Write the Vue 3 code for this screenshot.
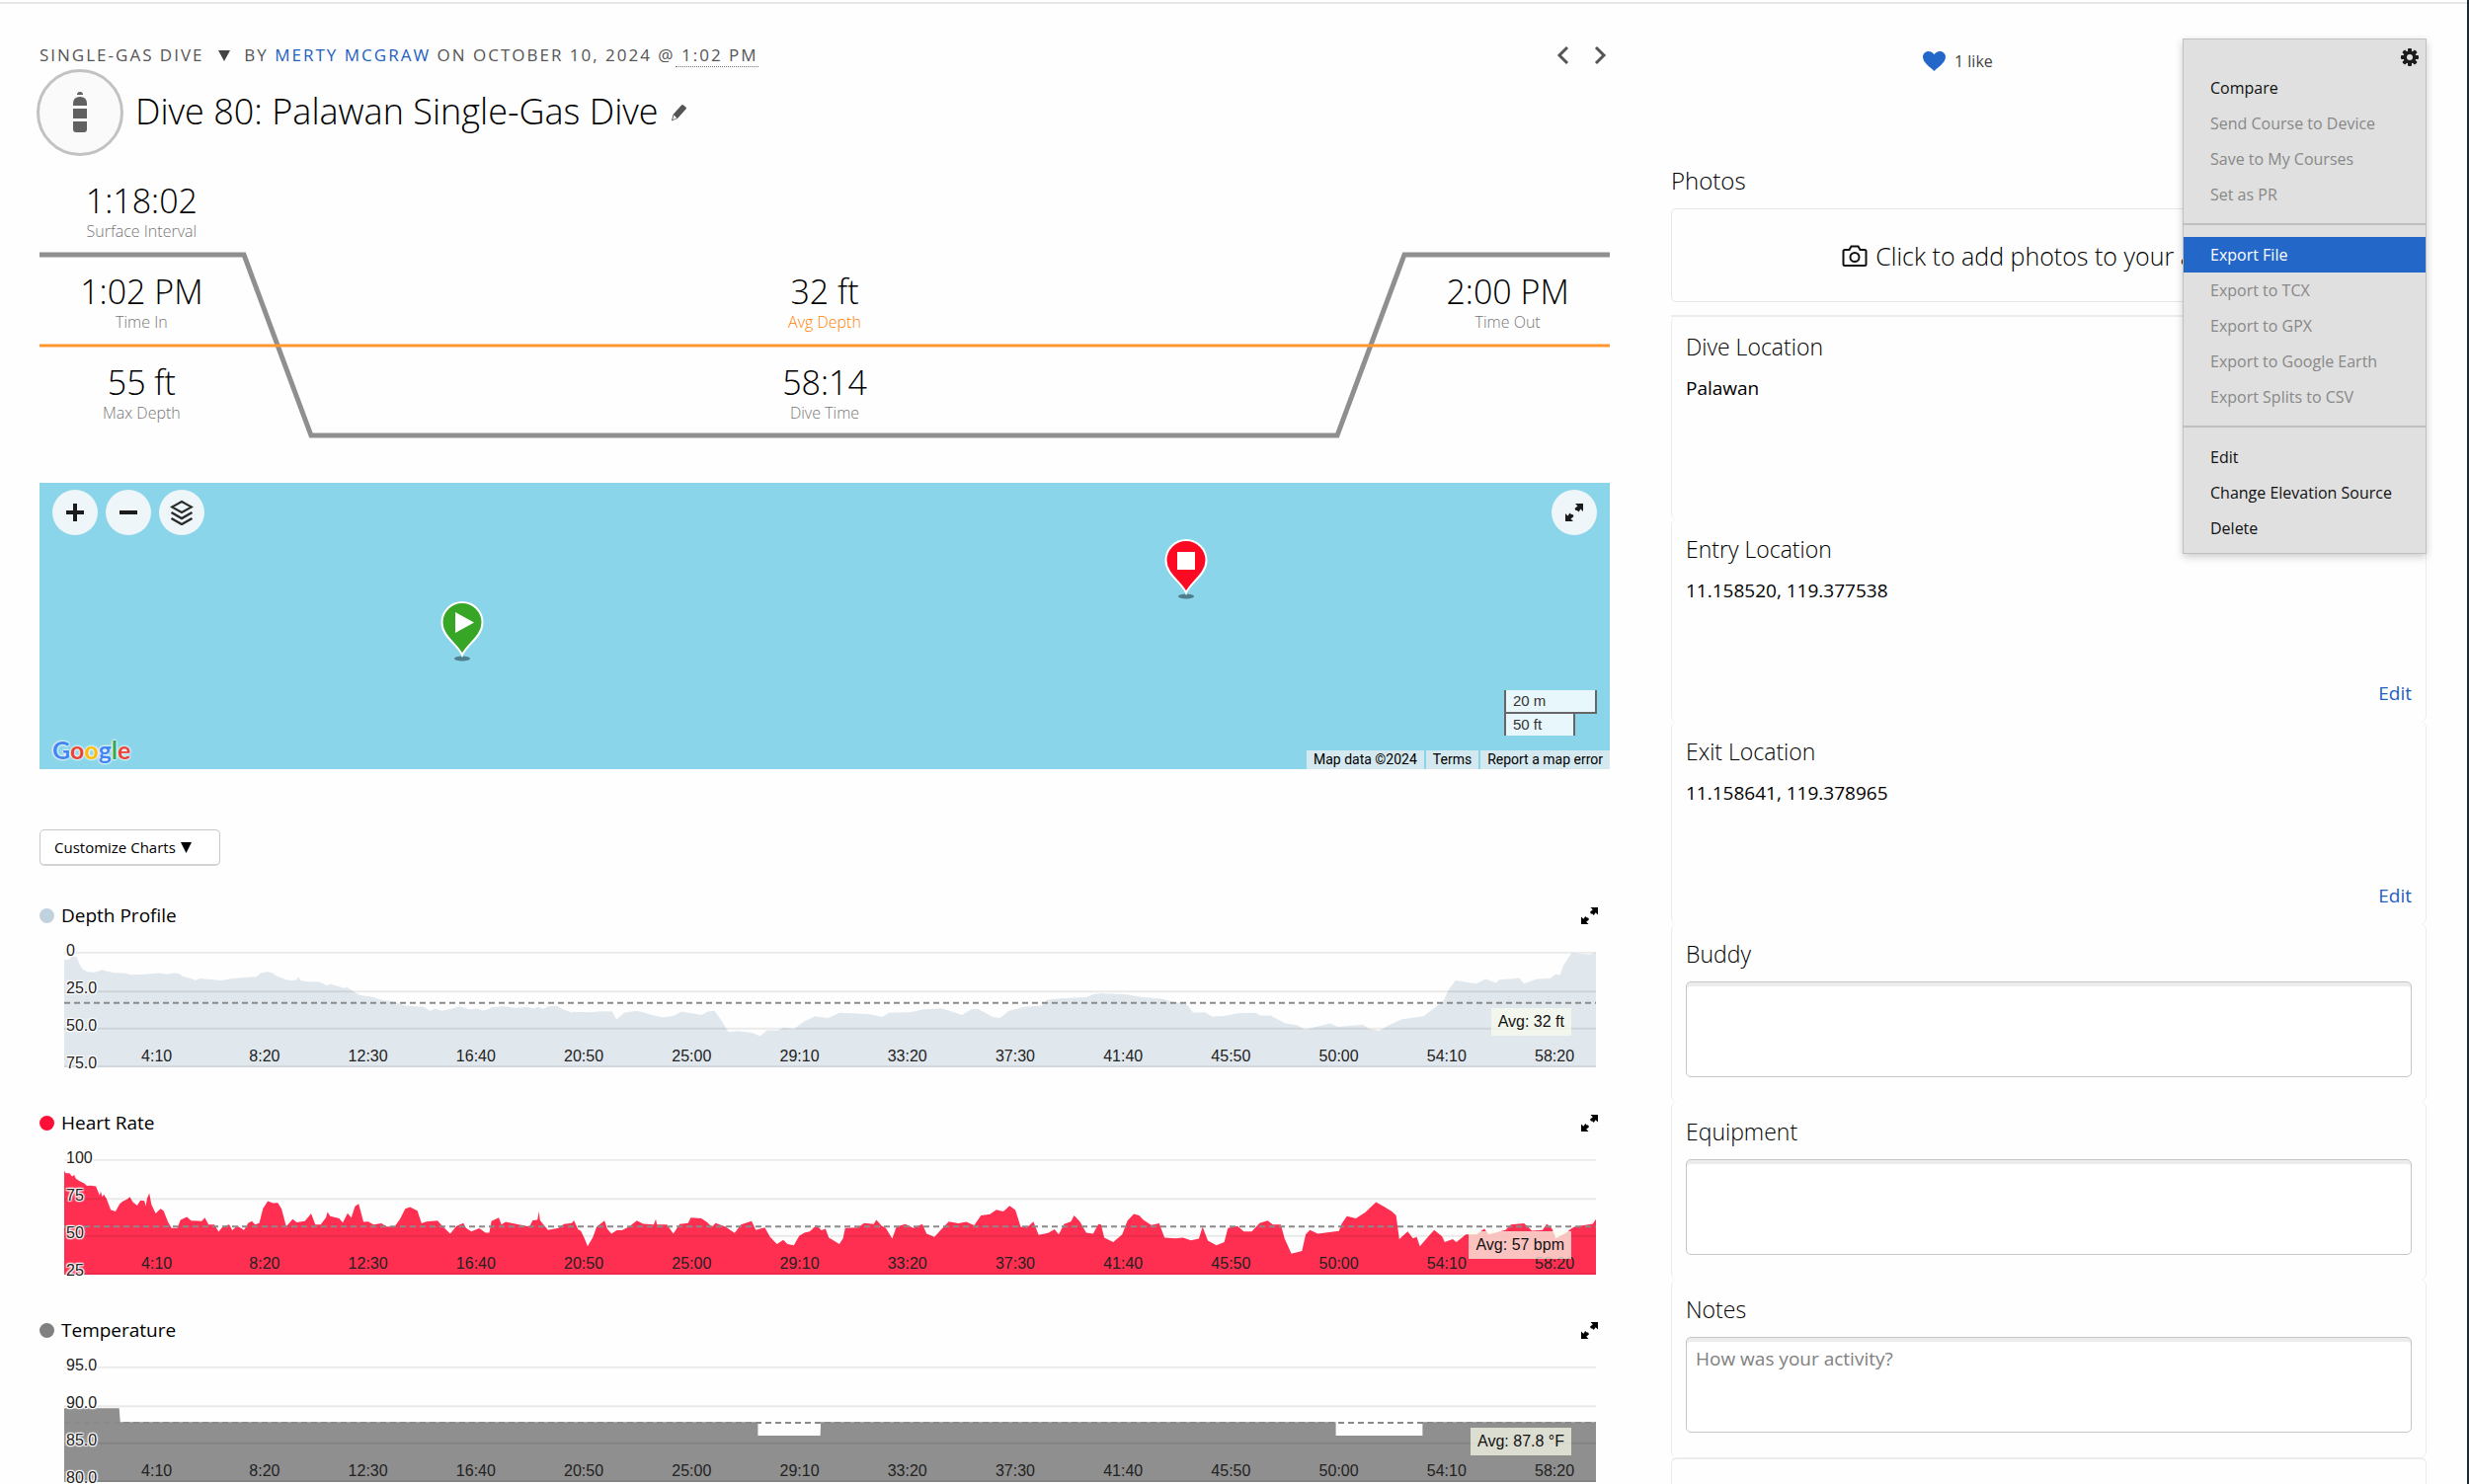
<script setup>
import { ref } from 'vue'

const stats = [
  [
    { value: '1:18:02', label: 'Surface Interval' },
    { value: '1:02 PM', label: 'Time In' },
    { value: '55 ft', label: 'Max Depth' },
  ],
  [
    null,
    { value: '32 ft', label: 'Avg Depth', accent: true },
    { value: '58:14', label: 'Dive Time' },
  ],
  [
    null,
    { value: '2:00 PM', label: 'Time Out' },
    null,
  ],
]

const menu = [
  [
    { label: 'Compare' },
    { label: 'Send Course to Device', disabled: true },
    { label: 'Save to My Courses', disabled: true },
    { label: 'Set as PR', disabled: true },
  ],
  [
    { label: 'Export File', active: true },
    { label: 'Export to TCX', disabled: true },
    { label: 'Export to GPX', disabled: true },
    { label: 'Export to Google Earth', disabled: true },
    { label: 'Export Splits to CSV', disabled: true },
  ],
  [
    { label: 'Edit' },
    { label: 'Change Elevation Source' },
    { label: 'Delete' },
  ],
]

const google = [
  ['G', '#4285f4'], ['o', '#ea4335'], ['o', '#fbbc05'],
  ['g', '#4285f4'], ['l', '#34a853'], ['e', '#ea4335'],
]

const ticks = ['4:10', '8:20', '12:30', '16:40', '20:50', '25:00', '29:10', '33:20', '37:30', '41:40', '45:50', '50:00', '54:10', '58:20']

// Each sample run is stored relative to its own origin; move it into plot space.
const run = (dx, dy, flat) => {
  const out = []
  for (let i = 0; i < flat.length; i += 2) out.push([flat[i] + dx, flat[i + 1] + dy])
  return out
}

const depth = [
  ...run(-13, -74, [13, 98, 28, 97, 36, 88, 50, 88, 60, 112, 68, 125, 85, 135, 105, 136, 118, 132, 128, 128, 140, 132, 165, 137, 200, 139, 215, 143, 260, 142, 300, 138, 325, 142, 345, 138, 362, 140, 375, 148, 400, 155, 412, 160, 425, 154, 455, 157, 490, 160, 520, 155, 560, 151, 598, 149, 610, 138, 630, 134, 645, 137, 658, 146, 680, 155, 700, 161, 720, 158, 725, 150, 732, 161, 755, 164, 790, 165, 812, 176, 822, 171, 850, 179, 865, 184, 873, 180, 890, 192, 910, 204, 950, 210, 980, 220, 1010, 223, 1022, 228, 1050, 236, 1105, 240, 1125, 252, 1140, 245, 1160, 252, 1190, 246, 1215, 238, 1245, 247, 1270, 245, 1285, 251, 1303, 247, 1310, 241, 1350, 238, 1385, 243, 1420, 240, 1440, 245, 1455, 240, 1468, 246, 1485, 238, 1510, 237, 1530, 247, 1555, 257]),
  ...run(1547, -74, [0, 255, 50, 256, 85, 253, 118, 254, 132, 278, 155, 258, 195, 252, 240, 264, 270, 271, 305, 267, 330, 254, 350, 258, 390, 264, 410, 254, 430, 252, 450, 280, 472, 316, 500, 313, 545, 318, 568, 328, 590, 310, 620, 311, 640, 302, 672, 306, 700, 285, 735, 268, 775, 273, 810, 258, 860, 260, 900, 262, 940, 270, 960, 258, 1025, 256, 1065, 247, 1120, 244, 1160, 257, 1182, 264, 1210, 247, 1230, 246, 1250, 256, 1275, 270, 1297, 273, 1325, 252, 1370, 240, 1425, 236, 1440, 218, 1490, 214, 1560, 211]),
  ...run(3107, -74, [20, 203, 45, 199, 90, 201, 125, 203, 165, 210, 230, 215, 260, 224, 305, 232, 325, 258, 360, 256, 382, 269, 420, 267, 460, 259, 515, 258, 528, 266, 560, 266, 605, 290, 640, 295, 665, 308, 685, 303, 710, 297, 740, 290, 765, 300, 840, 293, 858, 305, 890, 312, 920, 295, 960, 277, 1025, 268, 1060, 242, 1085, 222, 1100, 190, 1122, 160, 1185, 170, 1215, 156, 1245, 168, 1255, 158, 1300, 155, 1315, 152, 1330, 170, 1370, 156, 1410, 154, 1425, 142, 1440, 144, 1450, 115, 1475, 78, 1530, 82, 1549, 76]),
]

const heart = [
  ...run(-120, -713, [120, 744, 123, 750, 130, 750, 135, 758, 139, 754, 142, 764, 150, 771, 158, 776, 163, 783, 170, 782, 180, 784, 187, 808, 189, 797, 192, 812, 195, 805, 200, 816, 208, 845, 217, 850, 225, 830, 230, 824, 240, 817, 244, 812, 250, 825, 258, 834, 264, 821, 272, 822, 274, 836, 277, 815, 281, 802, 285, 832, 293, 855, 302, 843, 308, 848, 316, 876, 323, 893, 334, 893, 340, 872, 352, 864, 360, 874, 380, 875, 386, 866, 393, 884, 404, 884, 412, 903, 420, 889, 432, 884, 438, 899, 447, 887, 460, 898, 468, 880, 475, 875, 481, 884, 489, 880, 496, 842, 505, 823, 515, 828, 524, 827, 531, 843, 540, 889, 552, 870, 560, 878, 575, 875, 583, 862, 587, 855, 595, 884, 605, 884, 615, 866, 618, 851, 623, 862, 640, 868, 647, 879, 656, 854, 663, 866, 670, 836, 677, 830, 686, 877, 695, 876, 705, 884, 720, 881, 730, 889, 745, 889, 755, 870, 765, 843, 774, 838, 788, 848, 796, 881, 805, 876, 826, 874, 834, 886, 842, 897, 850, 908, 862, 888, 875, 880, 880, 893, 890, 902, 905, 894, 917, 905, 924, 905, 928, 875, 942, 866, 947, 884, 955, 877, 975, 883, 1000, 889, 1006, 873, 1015, 872, 1018, 850, 1020, 873, 1035, 898, 1055, 893, 1065, 883, 1080, 880, 1084, 873, 1092, 897, 1097, 900, 1104, 920, 1110, 941, 1120, 917, 1127, 890, 1142, 874, 1147, 895, 1155, 908, 1165, 899, 1175, 899, 1188, 890, 1203, 874, 1215, 882, 1235, 884, 1239, 870, 1241, 884, 1260, 884, 1272, 908, 1284, 883, 1300, 880, 1305, 866, 1325, 868, 1335, 877, 1345, 890, 1352, 880, 1370, 889, 1388, 906, 1400, 884, 1420, 875, 1428, 898, 1445, 892, 1455, 916, 1468, 935, 1480, 924, 1488, 935, 1500, 938, 1510, 914, 1520, 905, 1530, 902, 1543, 885, 1552, 899, 1560, 895, 1566, 918]),
  ...run(1411, -713, [40, 922, 55, 935, 62, 920, 66, 893, 90, 892, 102, 880, 120, 883, 125, 872, 135, 887, 143, 893, 155, 921, 163, 890, 180, 883, 195, 893, 212, 883, 220, 908, 235, 916, 248, 896, 262, 876, 280, 881, 295, 877, 310, 886, 323, 860, 340, 857, 352, 845, 365, 850, 377, 835, 388, 846, 398, 890, 410, 892, 422, 876, 432, 911, 450, 906, 462, 896, 470, 910, 480, 883, 493, 876, 499, 860, 510, 876, 522, 905, 535, 908, 545, 883, 550, 884, 556, 918, 573, 930, 590, 910, 600, 874, 612, 856, 622, 860, 630, 872, 645, 885, 660, 881, 670, 918, 690, 920, 705, 918, 720, 925, 735, 921, 742, 890, 752, 926, 768, 938, 783, 930, 790, 893, 808, 888, 820, 902, 835, 902, 850, 880, 865, 874, 875, 884, 890, 884, 897, 920, 910, 960, 930, 953, 937, 910, 945, 898, 960, 908, 1000, 901, 1005, 882, 1015, 862, 1032, 868, 1050, 852, 1070, 825, 1085, 837, 1100, 850, 1108, 860, 1114, 922, 1130, 902, 1140, 920, 1147, 916, 1153, 941, 1167, 918, 1180, 898, 1195, 915, 1200, 930, 1215, 922, 1222, 930, 1240, 910, 1260, 910, 1275, 895, 1283, 910, 1315, 898, 1325, 884, 1350, 881, 1365, 900, 1385, 898, 1393, 882, 1403, 895, 1410, 920, 1430, 905, 1437, 897, 1445, 890, 1480, 882, 1486, 870]),
]

const temperature = run(0, 0, [0, 109, 104, 109, 106, 145, 1312, 145, 1312, 181, 1430, 181, 1431, 145, 2405, 145, 2405, 181, 2569, 181, 2569, 145, 2897, 145])

const area = (points, width, height) =>
  `M0 ${height}L${points.map((p) => p.join(' ')).join('L')}L${width} ${height}Z`

const charts = [
  {
    name: 'Depth Profile', dot: '#c1d2df', fill: '#e0e7ed', avg: 'Avg: 32 ft',
    labels: ['0', '25.0', '50.0', '75.0'], w: 4656, h: 348, mean: 154, path: area(depth, 4656, 348),
  },
  {
    name: 'Heart Rate', dot: '#ff0f37', fill: '#fe2f51', avg: 'Avg: 57 bpm',
    labels: ['100', '75', '50', '25'], w: 2897, h: 302, mean: 176, path: area(heart, 2897, 302),
  },
  {
    name: 'Temperature', dot: '#808080', fill: '#8f8f8f', avg: 'Avg: 87.8 °F',
    labels: ['95.0', '90.0', '85.0', '80.0'], w: 2897, h: 302, mean: 147, path: area(temperature, 2897, 302),
  },
]

const locations = [
  { title: 'Dive Location', text: 'Palawan' },
  { title: 'Entry Location', text: '11.158520, 119.377538' },
  { title: 'Exit Location', text: '11.158641, 119.378965' },
]

const fields = ref([
  { id: 'buddy', title: 'Buddy', placeholder: '', value: '' },
  { id: 'equipment', title: 'Equipment', placeholder: '', value: '' },
  { id: 'notes', title: 'Notes', placeholder: 'How was your activity?', value: '' },
])
</script>

<template>
  <div class="page">
    <div class="rule"></div>
    <div class="columns">
      <main class="activity">
        <header class="byline">
          <p class="crumbs">
            <button class="type" type="button">Single-Gas Dive <svg width="12" height="12" viewBox="0 0 12 12"><path d="M0 1h12L6 12z" fill="#444" /></svg></button>
            by <a href="#">Merty McGraw</a> on October 10, 2024 @<span class="time">&nbsp;1:02 PM</span>
          </p>
          <nav class="pager">
            <button type="button" aria-label="Previous activity">
              <svg width="13" height="20" viewBox="0 0 13 20"><path d="M11 2L3 10l8 8" fill="none" stroke="#555" stroke-width="3" /></svg>
            </button>
            <button type="button" aria-label="Next activity">
              <svg width="13" height="20" viewBox="0 0 13 20"><path d="M2 2l8 8-8 8" fill="none" stroke="#555" stroke-width="3" /></svg>
            </button>
          </nav>
        </header>

        <div class="heading">
          <span class="badge">
            <svg width="14" height="42" viewBox="0 0 14 42" fill="#616161">
              <path d="M4 3Q4 0 7 0T10 3z" />
              <path d="M0 14v-2Q0 5 7 5t7 7v2z" />
              <path d="M0 17h14v10H0z" />
              <path d="M0 30h14v8q0 3-3 3H3q-3 0-3-3z" />
            </svg>
          </span>
          <h1>Dive 80: Palawan Single-Gas Dive</h1>
          <button class="pencil" type="button" aria-label="Edit title">
            <svg width="17" height="18" viewBox="0 0 17 18">
              <path d="M11 1.500q1-1 2 0l2.500 2q1 1 0 2L7 15l-6 2.500L2.500 11z" fill="#555" />
              <path d="M3.300 11.500l3 3-4 1.800z" fill="#fff" />
            </svg>
          </button>
        </div>

        <section class="profile">
          <svg class="trace" viewBox="0 0 1590 280" preserveAspectRatio="none" fill="none">
            <path d="M0 92H207L275 275H1314L1382 92H1590" stroke="#8f8f8f" stroke-width="5" />
            <path d="M0 184H1590" stroke="#ff962e" stroke-width="3" />
          </svg>
          <div class="stats">
            <div v-for="(column, c) in stats" :key="c" class="stat-column">
              <div v-for="(stat, r) in column" :key="r" class="stat">
                <template v-if="stat">
                  <div class="value">{{ stat.value }}</div>
                  <div class="label" :class="{ accent: stat.accent }">{{ stat.label }}</div>
                </template>
              </div>
            </div>
          </div>
        </section>

        <section class="map">
          <div class="map-top">
            <div class="zoomers">
              <button class="round" type="button" aria-label="Zoom in">
                <svg width="20" height="20" viewBox="0 0 20 20"><path d="M10 1v18M1 10h18" stroke="#1c1c1c" stroke-width="4" /></svg>
              </button>
              <button class="round" type="button" aria-label="Zoom out">
                <svg width="20" height="20" viewBox="0 0 20 20"><path d="M1 10h18" stroke="#1c1c1c" stroke-width="4" /></svg>
              </button>
              <button class="round" type="button" aria-label="Map layers">
                <svg width="24" height="26" viewBox="0 0 24 26" fill="none" stroke="#2a2a2a" stroke-width="2">
                  <path d="M12 2l10 5.500-10 5.500L2 7.500z" />
                  <path d="M1.500 13L12 19l10.500-6M1.500 19L12 25l10.500-6" stroke-width="2.400" />
                </svg>
              </button>
            </div>
            <button class="round" type="button" aria-label="Full screen map">
              <svg width="18" height="18" viewBox="0 0 18 18" fill="#1c1c1c">
                <path d="M10 0h8v8l-2.500-2.500-2 3L12 7l-1.500 0L9.500 5l3-2.500z" />
                <path d="M8 18H0v-8l2.500 2.500 2-3L6 11l1.500 0L8.500 13l-3 2.500z" />
              </svg>
            </button>
          </div>
          <svg class="pin start" width="44" height="64" viewBox="0 0 44 64">
            <ellipse cx="22" cy="58" rx="8" ry="2.500" fill="#4d7f8e" />
            <path d="M22 54.500C18 44 1.500 36 1.500 21.500a20.500 20.500 0 0 1 41 0C42.500 36 26 44 22 54.500z" fill="#37a526" stroke="#fff" stroke-width="2" />
            <path d="M15 11l19 10.500L15 32z" fill="#fff" />
          </svg>
          <svg class="pin finish" width="44" height="64" viewBox="0 0 44 64">
            <ellipse cx="22" cy="58" rx="8" ry="2.500" fill="#4d7f8e" />
            <path d="M22 54.500C18 44 1.500 36 1.500 21.500a20.500 20.500 0 0 1 41 0C42.500 36 26 44 22 54.500z" fill="#fc0a23" stroke="#fff" stroke-width="2" />
            <path d="M13 13h18v18H13z" fill="#fff" />
          </svg>
          <div class="map-bottom">
            <a class="google" href="#" aria-label="Google"><span v-for="(g, i) in google" :key="i" :style="{ color: g[1] }">{{ g[0] }}</span></a>
            <div class="map-info">
              <div class="scale">
                <span class="metres">20 m</span>
                <span class="feet">50 ft</span>
              </div>
              <div class="credits">
                <span>Map data ©2024</span>
                <a href="#">Terms</a>
                <a href="#">Report a map error</a>
              </div>
            </div>
          </div>
        </section>

        <button class="customize" type="button">
          Customize Charts
          <svg width="11" height="11" viewBox="0 0 12 12"><path d="M0 0h12L6 12z" /></svg>
        </button>

        <div class="charts">
          <section v-for="chart in charts" :key="chart.name" class="chart">
            <header>
              <span class="dot" :style="{ background: chart.dot }"></span>
              <h2>{{ chart.name }}</h2>
              <button class="expand" type="button" :aria-label="'Expand ' + chart.name">
                <svg width="17" height="17" viewBox="0 0 18 18">
                  <path d="M10 0h8v8l-2.500-2.500-2 3L12 7l-1.500 0L9.500 5l3-2.500z" />
                  <path d="M8 18H0v-8l2.500 2.500 2-3L6 11l1.500 0L8.500 13l-3 2.500z" />
                </svg>
              </button>
            </header>
            <div class="plot">
              <svg class="canvas" :viewBox="`0 0 ${chart.w} ${chart.h}`" preserveAspectRatio="none">
                <path :d="chart.path" :fill="chart.fill" />
                <path
                  v-for="f in [0.006, 0.345, 0.665, 0.994]" :key="f" class="grid"
                  :d="`M0 ${f * chart.h}H${chart.w}`"
                />
                <path class="mean" :d="`M0 ${chart.mean}H${chart.w}`" />
              </svg>
              <div class="y-axis">
                <span v-for="label in chart.labels" :key="label">{{ label }}</span>
              </div>
              <div class="x-axis">
                <span v-for="tick in ticks" :key="tick">{{ tick }}</span>
              </div>
              <div class="avg" :style="{ top: (chart.mean / chart.h) * 100 + '%' }">{{ chart.avg }}</div>
            </div>
          </section>
        </div>
      </main>

      <aside class="details">
        <div class="social">
          <button class="like" type="button">
            <svg width="23" height="20" viewBox="0 0 23 20"><path d="M11.500 20C8 16.500 0 11.500 0 5.800 0 2.500 2.500 0 5.800 0c2.400 0 4.600 1.300 5.700 3.200C12.600 1.300 14.800 0 17.200 0 20.500 0 23 2.500 23 5.800 23 11.500 15 16.500 11.500 20z" fill="#2368c9" /></svg>
            1 like
          </button>
        </div>

        <h2 class="photos-title">Photos</h2>
        <button class="photos" type="button">
          <svg width="26" height="22" viewBox="0 0 26 22" fill="none" stroke="#111" stroke-width="2">
            <path d="M3 5h4.500L9.500 1.500h7L18.500 5H23q1.500 0 1.500 1.500v13q0 1.500-1.500 1.500H3q-1.500 0-1.500-1.500v-13Q1.500 5 3 5z" />
            <circle cx="13" cy="12.500" r="4.500" />
          </svg>
          Click to add photos to your activity
        </button>

        <div class="cards">
          <section v-for="place in locations" :key="place.title" class="card place">
            <h3>{{ place.title }}</h3>
            <p>{{ place.text }}</p>
            <a href="#">Edit</a>
          </section>
          <section v-for="field in fields" :key="field.id" class="card">
            <h3><label :for="field.id">{{ field.title }}</label></h3>
            <textarea :id="field.id" v-model="field.value" :placeholder="field.placeholder"></textarea>
          </section>
          <section class="card rest"></section>
        </div>

        <div class="menu">
          <button class="gear" type="button" aria-label="More options">
            <svg width="18" height="18" viewBox="0 0 18 18">
              <g fill="#1c1c1c">
                <rect v-for="a in [0, 45, 90, 135]" :key="a" x="7" y="0" width="4" height="18" rx="1" :transform="`rotate(${a} 9 9)`" />
                <circle cx="9" cy="9" r="6.500" />
              </g>
              <circle cx="9" cy="9" r="3" fill="#e0e0e0" />
            </svg>
          </button>
          <ul v-for="(group, i) in menu" :key="i">
            <li v-for="item in group" :key="item.label">
              <button type="button" :disabled="item.disabled" :class="{ active: item.active }">{{ item.label }}</button>
            </li>
          </ul>
        </div>
      </aside>
    </div>
  </div>
</template>

<style>
body {
  margin: 0;
  background: #fff;
}
</style>

<style scoped>
.page,
.page * {
  box-sizing: border-box;
}

.page {
  display: flex;
  flex-direction: column;
  height: 100vh;
  overflow: hidden;
  padding-top: 2px;
  border-right: 2px solid #1b2a33;
  background: #fefefe;
  color: #000;
  font-family: "Open Sans", sans-serif;
}

.rule {
  flex: none;
  height: 2px;
  background: #e6e6e6;
}

.columns {
  flex: 1;
  display: grid;
  grid-template-columns: minmax(0, 1590fr) minmax(0, 765fr);
  column-gap: 62px;
  padding: 40px 41px 0 40px;
}

h1, h2, h3, p, ul {
  margin: 0;
  padding: 0;
  font-weight: 400;
}

button {
  padding: 0;
  border: 0;
  background: none;
  color: inherit;
  font: inherit;
  cursor: pointer;
}

svg {
  display: block;
}

a {
  color: #1f5fc0;
  text-decoration: none;
}

.activity {
  display: flex;
  flex-direction: column;
}

.byline {
  display: flex;
  justify-content: space-between;
  align-items: center;
  height: 24px;
}

.crumbs {
  color: #555;
  font-size: 17px;
  line-height: 24px;
  letter-spacing: 2px;
  text-transform: uppercase;
}

.type {
  letter-spacing: 2px;
  text-transform: uppercase;
}

.type svg {
  display: inline-block;
  margin: 0 8px;
}

.time {
  border-bottom: 1px dotted #777;
}

.pager {
  display: flex;
  gap: 25px;
  margin-right: 3px;
}

.heading {
  display: flex;
  align-items: center;
  height: 88px;
  margin: 2px 0 0 -3px;
}

.badge {
  display: grid;
  place-items: center;
  width: 88px;
  height: 88px;
  border: 3px solid #c2c2c2;
  border-radius: 50%;
  background: #fafafa;
}

h1 {
  margin: 0 12px;
  padding-bottom: 2px;
  font-size: 36px;
  font-weight: 300;
  line-height: 48px;
}

.profile {
  display: grid;
  height: 280px;
  margin-top: 8px;
}

.trace,
.stats {
  grid-area: 1 / 1;
  width: 100%;
  height: 280px;
}

.stats {
  display: grid;
  grid-template-columns: 13fr 74fr 13fr;
}

.stat {
  height: 92px;
  padding-top: 17px;
  text-align: center;
}

.value {
  font-size: 34px;
  font-weight: 300;
  line-height: 40px;
}

.label {
  color: #777;
  font-size: 16px;
  font-weight: 300;
  line-height: 22px;
}

.label.accent {
  color: #ff8000;
}

.map {
  position: relative;
  display: flex;
  flex-direction: column;
  justify-content: space-between;
  height: 290px;
  margin-top: 43px;
  background: #8ad5e9;
}

.map-top {
  display: flex;
  justify-content: space-between;
  padding: 7px 13px;
}

.zoomers {
  display: flex;
  gap: 8px;
}

.round {
  display: grid;
  place-items: center;
  width: 46px;
  height: 46px;
  border-radius: 50%;
  background: #eef6f9;
}

.pin {
  position: absolute;
  transform: translateX(-50%);
}

.start {
  left: 26.9%;
  top: 120px;
}

.finish {
  left: 73%;
  top: 57px;
}

.map-bottom {
  display: flex;
  justify-content: space-between;
  align-items: flex-end;
}

.google {
  padding: 0 13px;
  font-family: Lato, sans-serif;
  font-size: 25px;
  font-weight: 700;
  line-height: 40px;
  text-shadow: 0 0 2px #fff, 0 0 2px #fff, 0 0 3px #fff;
}

.map-info {
  display: flex;
  flex-direction: column;
  align-items: flex-end;
}

.scale {
  width: 94px;
  margin: 0 13px 15px 0;
  color: #333;
  font-family: "Liberation Sans", sans-serif;
  font-size: 15px;
  line-height: 22px;
}

.scale span {
  display: block;
  padding-left: 7px;
  border: 2px solid #666;
  border-top: 0;
  background: rgba(255, 255, 255, 0.8);
}

.scale .feet {
  width: 72px;
  border-bottom: 0;
}

.credits {
  display: flex;
  gap: 2px;
  font-family: Roboto, sans-serif;
  font-size: 14px;
  line-height: 19px;
}

.credits > * {
  padding: 0 7px;
  background: #d4e8ef;
  color: #000;
}

.customize {
  display: flex;
  align-items: center;
  gap: 5px;
  width: 183px;
  height: 37px;
  margin-top: 61px;
  padding-left: 14px;
  border: 1px solid #c8c8c8;
  border-bottom: 2px solid #d4d4d4;
  border-radius: 5px;
  background: #fff;
  font-size: 15px;
}

.charts {
  display: flex;
  flex-direction: column;
  gap: 43px;
  margin-top: 37px;
}

.chart header {
  display: flex;
  align-items: center;
  gap: 7px;
  height: 26px;
  padding-right: 12px;
}

.dot {
  width: 15px;
  height: 15px;
  border-radius: 50%;
}

.chart h2 {
  flex: 1;
  font-size: 19px;
  line-height: 26px;
}

.plot {
  position: relative;
  height: 117px;
  margin: 24px 14px 0 25px;
  font-family: "Liberation Sans", sans-serif;
  font-size: 16px;
  line-height: 18px;
  color: #222;
}

.canvas {
  width: 100%;
  height: 117px;
}

.grid,
.mean {
  fill: none;
  stroke: rgba(0, 0, 0, 0.08);
  stroke-width: 2px;
  vector-effect: non-scaling-stroke;
}

.mean {
  stroke: #8a8a8a;
  stroke-dasharray: 6 4;
}

.y-axis {
  position: absolute;
  left: 2px;
  top: -7px;
  display: flex;
  flex-direction: column;
  gap: 26px;
  line-height: 12px;
  text-shadow:
    1px 1px 1px #fff, -1px 1px 1px #fff, 1px -1px 1px #fff, -1px -1px 1px #fff,
    0 0 3px #fff;
}

.x-axis {
  position: absolute;
  inset: auto 0 2px 0;
  display: flex;
  text-align: right;
}

.x-axis span {
  width: 7.042%;
}

.avg {
  position: absolute;
  right: 25px;
  margin-top: 5px;
  padding: 0 7px;
  background: rgba(250, 252, 235, 0.72);
  color: #111;
  line-height: 28px;
}

.details {
  position: relative;
  display: flex;
  flex-direction: column;
}

.social {
  display: grid;
  grid-template-columns: repeat(3, 1fr);
  height: 36px;
  margin-bottom: 87px;
}

.like {
  grid-column: 2;
  display: flex;
  align-items: center;
  gap: 9px;
  color: #444;
  font-size: 16px;
}

.photos-title {
  font-size: 24px;
  font-weight: 300;
  line-height: 32px;
}

.photos {
  display: flex;
  justify-content: center;
  align-items: center;
  gap: 8px;
  height: 95px;
  margin: 12px 0 13px;
  border: 1px solid #e6e6e6;
  border-radius: 5px;
  font-size: 25px;
  font-weight: 300;
}

.cards {
  flex: 1;
  display: flex;
  flex-direction: column;
  border-top: 2px solid #ececec;
}

.card {
  display: flex;
  flex-direction: column;
  height: 180px;
  padding: 14px 14px 16px;
  border: 1px solid #ececec;
  border-width: 0 1px;
  border-radius: 6px;
}

.place {
  height: 205px;
}

.rest {
  flex: 1;
  border-top-width: 2px;
  border-radius: 6px 6px 0 0;
}

h3 {
  font-size: 23px;
  font-weight: 300;
  line-height: 32px;
}

.place p {
  flex: 1;
  padding-top: 13px;
  font-size: 19px;
  line-height: 26px;
}

.place a {
  align-self: flex-end;
  font-size: 19px;
  line-height: 26px;
}

textarea {
  display: block;
  width: 100%;
  height: 97px;
  margin-top: 12px;
  padding: 8px 9px;
  border: 1px solid #c6c6c6;
  border-radius: 5px;
  outline: 0;
  resize: none;
  background: #fff;
  box-shadow: inset 0 4px 0 #ececec;
  color: inherit;
  font: 400 19px/26px "Open Sans", sans-serif;
}

textarea::placeholder {
  color: #808080;
}

.menu {
  position: absolute;
  top: -5px;
  right: 0;
  display: flex;
  flex-direction: column;
  width: 247px;
  padding-bottom: 7px;
  border: 1px solid #c0c0c0;
  background: #e0e0e0;
  box-shadow: 0 3px 8px rgba(0, 0, 0, 0.2);
  font-size: 16px;
}

.gear {
  align-self: flex-end;
  height: 31px;
  padding: 5px 7px 0;
}

.menu ul {
  list-style: none;
}

.menu ul + ul {
  margin-top: 11px;
  padding-top: 12px;
  border-top: 2px solid #bfbfbf;
}

.menu li button {
  width: 100%;
  height: 36px;
  padding-left: 27px;
  color: #111;
  text-align: left;
}

.menu li button:disabled {
  color: #888;
}

.menu li button.active {
  background: #2368c9;
  color: #fff;
}
</style>
